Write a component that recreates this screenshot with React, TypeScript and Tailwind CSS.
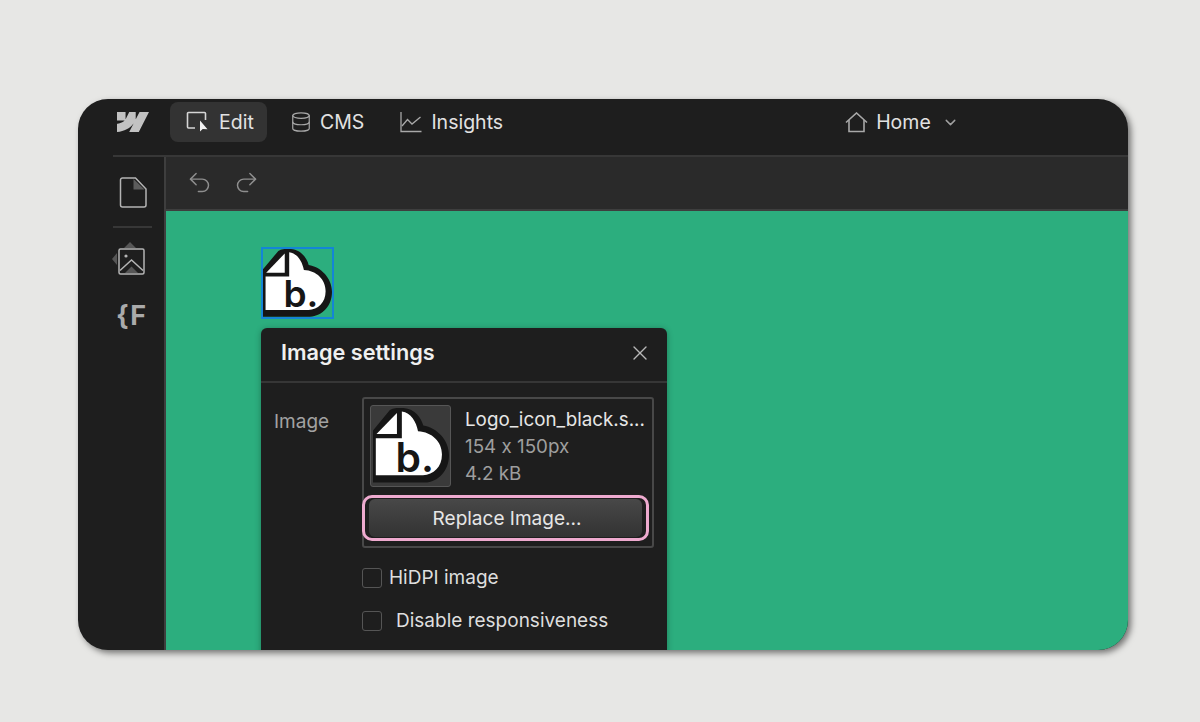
import { ChevronDown, Database, Redo2, Undo2, X } from 'lucide-react'
import { SiWebflow } from 'react-icons/si'

const font = { fontFamily: 'Inter, "Noto Sans", sans-serif' }

function EditIcon() {
  return (
    <svg width="23" height="22" viewBox="0 0 23 22" fill="none">
      <path d="M9 17H2.500a1 1 0 0 1-1-1V2.500a1 1 0 0 1 1-1h16a1 1 0 0 1 1 1V9" stroke="#d6d6d6" strokeWidth="1.6" />
      <path d="M14 9.500v11l2.700-2.500 4.800.2z" fill="#f2f2f2" />
    </svg>
  )
}

function InsightsIcon() {
  return (
    <svg width="22" height="22" viewBox="0 0 22 22" fill="none" stroke="#a8a8a8" strokeWidth="1.3">
      <path d="M1 1v19.500h20.500" />
      <path d="M2 15l5.500-6.500 4.500 4.500 8.500-7" />
    </svg>
  )
}

function HomeIcon() {
  return (
    <svg width="23" height="21" viewBox="0 0 23 21" fill="none" stroke="#a8a8a8" strokeWidth="1.6">
      <path d="M1 10.500 11.500 1 22 10.500" strokeLinejoin="miter" />
      <path d="M4 8v11.500h15V8" />
    </svg>
  )
}

function PageIcon() {
  return (
    <svg width="28" height="31" viewBox="0 0 28 31" fill="none">
      <path d="M3.500 1h13L27 12v16a2 2 0 0 1-2 2H3.500a2 2 0 0 1-2-2V3a2 2 0 0 1 2-2z" stroke="#b4b4b4" strokeWidth="1.5" />
      <path d="M14.500 2v10.500h11z" fill="#5c5c5c" />
    </svg>
  )
}

function AssetsIcon() {
  return (
    <svg width="36" height="34" viewBox="0 0 36 34" fill="none">
      <path d="M18 0l6 6H12zM0 17l5-6v12z" fill="#565656" />
      <rect x="7" y="7" width="25" height="25" rx="1.5" fill="#1e1e1e" stroke="#b4b4b4" strokeWidth="1.5" />
      <circle cx="14" cy="14" r="1.6" fill="#b4b4b4" />
      <path d="M8 28.500 19.500 18 31 28.500" stroke="#b4b4b4" strokeWidth="1.5" />
      <path d="M13 31l6.500-6.500L26 31z" fill="#565656" />
    </svg>
  )
}

function Logo({ size }: { size: number }) {
  return (
    <svg width={size} height={size} viewBox="18 18 216 212" className="block">
      <path d="M16 82 66 22Q76 14 105 16C138 19 155 44 161 66 200 72 234 108 234 150 234 194 204 226 165 228L16 228Z" fill="#161616" />
      <path d="M26 102H100V26C126 30 141 55 146 82 186 84 214 112 214 148 214 184 190 205 160 207H26Z" fill="#fff" />
      <path d="M28 90 86 30V90Z" fill="#fff" />
      <text x="82" y="198" fontSize="116" fontWeight="600" fill="#161616" style={font}>b.</text>
    </svg>
  )
}

function Checkbox({ label, labelClass }: { label: string; labelClass: string }) {
  return (
    <div className="flex items-center">
      <div className="h-5 w-5 rounded-[3px] border border-[#555555]" />
      <span className={`text-[19px] leading-[22px] text-[#dedede] ${labelClass}`}>{label}</span>
    </div>
  )
}

function ImageSettings() {
  return (
    <div className="absolute left-[95px] top-[117px] h-[340px] w-[406px] rounded-t-md bg-[#1e1e1e] shadow-[0_1px_6px_rgba(0,0,0,0.3)] [font-feature-settings:'calt'_0]">
      <div className="flex h-[55px] items-center justify-between border-b-2 border-[#363636] pb-[4px] pl-5 pr-[15px]">
        <span className="text-[21.700px] font-semibold text-[#f0f0f0]">Image settings</span>
        <X size={24} strokeWidth={1.4} className="text-[#b8b8b8]" />
      </div>
      <div className="flex pl-[13px] pt-[14px]">
        <span className="w-[88px] pt-[14px] text-[19px] leading-[22px] text-[#a2a2a2]">Image</span>
        <div>
          <div className="h-[151px] w-[292px] rounded-[3px] border-2 border-[#484848] pl-[6px] pt-[6px]">
            <div className="flex">
              <div className="flex h-[82px] w-[81px] shrink-0 items-center justify-center rounded-[3px] border border-[#565656] bg-[#3a3a3a]">
                <Logo size={76} />
              </div>
              <div className="pl-[14px] pt-[1px] text-[18.800px] leading-[27px] text-[#9e9e9e]">
                <div className="whitespace-nowrap text-[#e6e6e6]">Logo_icon_black.s...</div>
                <div>154 x 150px</div>
                <div>4.2 kB</div>
              </div>
            </div>
          </div>
          <div className="-mt-[53px] mb-6 w-[287px] rounded-[10px] border-[3px] border-[#eeaacf] px-[4px] py-[1px]">
            <div className="flex h-[38px] items-center justify-center rounded-md bg-gradient-to-b from-[#484848] to-[#333333] pl-[3px] pt-[3px] text-[19px] text-[#e6e6e6]">
              Replace Image...
            </div>
          </div>
          <div className="flex flex-col gap-[21px] pt-[2px]">
            <Checkbox label="HiDPI image" labelClass="pl-[7px]" />
            <Checkbox label="Disable responsiveness" labelClass="pl-[14px]" />
          </div>
        </div>
      </div>
    </div>
  )
}

export default function App() {
  return (
    <div className="h-[722px] w-[1200px] overflow-hidden bg-[#e7e7e5] pl-[78px] pt-[99px]" style={font}>
      <div className="flex h-[551px] w-[1050px] flex-col overflow-hidden rounded-[30px] bg-[#1e1e1e] shadow-[3px_3px_6px_rgba(0,0,0,0.5)]">
        <div className="flex h-[56px] shrink-0 items-start pt-[3px] text-[19.500px]">
          <div className="flex h-10 w-[92px] shrink-0 items-center justify-center pl-[18px]">
            <SiWebflow size={32} className="text-[#c2c2c2]" />
          </div>
          <div className="flex h-10 w-[97px] items-center gap-[10px] rounded-lg bg-[#333333] pl-4 text-[#e2e2e2]">
            <EditIcon />
            <span className="pt-[1px]">Edit</span>
          </div>
          <div className="ml-6 flex h-10 items-center gap-2 text-[#e2e2e2]">
            <Database size={22} strokeWidth={1.3} className="-ml-[1px] text-[#a8a8a8]" />
            <span className="pt-[1px]">CMS</span>
          </div>
          <div className="ml-[36px] flex h-10 items-center gap-[9px] text-[#e2e2e2]">
            <InsightsIcon />
            <span className="pt-[1px]">Insights</span>
          </div>
          <div className="ml-[342px] flex h-10 items-center gap-2 text-[#e2e2e2]">
            <HomeIcon />
            <span className="pt-[2px]">Home</span>
            <ChevronDown size={17} className="ml-[3px] text-[#a0a0a0]" />
          </div>
        </div>
        <div className="ml-[35px] h-[2px] shrink-0 bg-[#373737]" />
        <div className="flex min-h-0 flex-1">
          <div className="flex w-[88px] shrink-0 flex-col border-r-2 border-[#3e3e3e]">
            <div className="ml-[41px] mt-5">
              <PageIcon />
            </div>
            <div className="ml-[35px] mt-[18px] h-[2px] w-[39px] bg-[#373737]" />
            <div className="ml-[34px] mt-[14px]">
              <AssetsIcon />
            </div>
            <div className="ml-[38px] mt-[25px] text-[27px] font-bold leading-[30px] tracking-[1px] text-[#aaaaaa]">
              {'{F'}
            </div>
          </div>
          <div className="flex min-w-0 flex-1 flex-col">
            <div className="flex h-[54px] shrink-0 items-center gap-[20px] border-b-2 border-[#3e3e3e] bg-[#2a2a2a] pb-[2px] pl-5">
              <Undo2 size={27} strokeWidth={1.3} className="text-[#8e8e8e]" />
              <Redo2 size={27} strokeWidth={1.3} className="text-[#8e8e8e]" />
            </div>
            <div className="relative flex-1 bg-[#2cae7e]">
              <div className="absolute left-[95px] top-[36px] h-[72px] w-[73px] border-2 border-[#1485d6]">
                <Logo size={69} />
              </div>
              <ImageSettings />
            </div>
          </div>
        </div>
      </div>
    </div>
  )
}
